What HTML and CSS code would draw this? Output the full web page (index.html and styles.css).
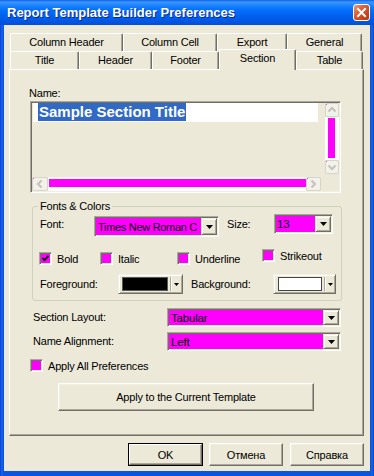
FILE: index.html
```html
<!DOCTYPE html>
<html>
<head>
<meta charset="utf-8">
<link rel="stylesheet" href="styles.css">
</head>
<body>
<div class="window">
  <div class="titlebar">
    <span class="title">Report Template Builder Preferences</span>
    <span class="close"><svg width="15" height="15" viewBox="0 0 15 15"><path d="M4 4 L11 11 M11 4 L4 11" stroke="#fff" stroke-width="2" stroke-linecap="square"/></svg></span>
  </div>
  <div class="client">
    <div class="tabs">
      <div class="tabrow">
        <div class="tab t113">Column Header</div>
        <div class="tab t94">Column Cell</div>
        <div class="tab t70">Export</div>
        <div class="tab t75">General</div>
      </div>
      <div class="tabrow">
        <div class="tab t69">Title</div>
        <div class="tab t73">Header</div>
        <div class="tab t67">Footer</div>
        <div class="tab t77 active">Section</div>
        <div class="tab t67">Table</div>
      </div>
    </div>
    <div class="panel">
      <div class="name-label">Name:</div>
      <div class="namefield">
        <div class="nf-top">
          <div class="nf-text">
            <div class="sel-row"><span class="sel">Sample Section Title</span></div>
          </div>
          <div class="vscroll">
            <div class="sbtn mark"><svg width="12" height="12" viewBox="0 0 12 12"><polyline points="2.5,7.5 6,4 9.5,7.5" fill="none" stroke="#C4C2B8" stroke-width="2"/></svg></div>
            <div class="vtrack"><div class="vthumb"></div></div>
            <div class="sbtn mark"><svg width="12" height="12" viewBox="0 0 12 12"><polyline points="2.5,4.5 6,8 9.5,4.5" fill="none" stroke="#C4C2B8" stroke-width="2"/></svg></div>
          </div>
        </div>
        <div class="hscroll">
          <div class="sbtn hb16 mark"><svg width="14" height="12" viewBox="0 0 14 12"><polyline points="8.5,2.5 5,6 8.5,9.5" fill="none" stroke="#C4C2B8" stroke-width="2"/></svg></div>
          <div class="htrack"><div class="hthumb"></div></div>
          <div class="sbtn hb15 mark"><svg width="13" height="12" viewBox="0 0 13 12"><polyline points="4.5,2.5 8,6 4.5,9.5" fill="none" stroke="#C4C2B8" stroke-width="2"/></svg></div>
        </div>
      </div>

      <div class="group">
        <div class="group-title">Fonts &amp; Colors</div>
        <div class="grow">
          <div class="glabel w54">Font:</div>
          <div class="combo font-combo">
            <div class="ctext">Times New Roman C</div>
            <div class="ddbtn"><svg width="7" height="4" viewBox="0 0 7 4"><polygon points="0,0 7,0 3.5,4" fill="#000"/></svg></div>
          </div>
          <div class="glabel size-label">Size:</div>
          <div class="combo size-combo">
            <div class="ctext">13</div>
            <div class="ddbtn"><svg width="7" height="4" viewBox="0 0 7 4"><polygon points="0,0 7,0 3.5,4" fill="#000"/></svg></div>
          </div>
        </div>
        <div class="checks">
          <div class="chk c61"><span class="cb"><svg width="9" height="9" viewBox="0 0 9 9"><polyline points="1.5,4 3.5,6.2 7.5,1.8" fill="none" stroke="#000" stroke-width="1.8"/></svg></span><span>Bold</span></div>
          <div class="chk c77"><span class="cb"></span><span>Italic</span></div>
          <div class="chk c85"><span class="cb"></span><span>Underline</span></div>
          <div class="chk up3"><span class="cb"></span><span>Strikeout</span></div>
        </div>
        <div class="colors">
          <div class="clabel w78">Foreground:</div>
          <div class="ccombo w65">
            <span class="swatch black w46"></span>
            <span class="csep"></span>
            <span class="carrow"><svg width="5" height="3" viewBox="0 0 5 3"><polygon points="0,0 5,0 2.5,3" fill="#000"/></svg></span>
          </div>
          <div class="clabel bg-label">Background:</div>
          <div class="ccombo w63">
            <span class="swatch white w44"></span>
            <span class="csep"></span>
            <span class="carrow"><svg width="5" height="3" viewBox="0 0 5 3"><polygon points="0,0 5,0 2.5,3" fill="#000"/></svg></span>
          </div>
        </div>
      </div>

      <div class="frow first">
        <div class="flabel">Section Layout:</div>
        <div class="combo wide-combo">
          <div class="ctext">Tabular</div>
          <div class="ddbtn"><svg width="7" height="4" viewBox="0 0 7 4"><polygon points="0,0 7,0 3.5,4" fill="#000"/></svg></div>
        </div>
      </div>
      <div class="frow second">
        <div class="flabel">Name Alignment:</div>
        <div class="combo wide-combo">
          <div class="ctext">Left</div>
          <div class="ddbtn"><svg width="7" height="4" viewBox="0 0 7 4"><polygon points="0,0 7,0 3.5,4" fill="#000"/></svg></div>
        </div>
      </div>
      <div class="apply-all"><span class="cb"></span><span>Apply All Preferences</span></div>
      <div class="btn apply-btn">Apply to the Current Template</div>
    </div>
    <div class="buttons">
      <div class="btn dlg default"><span class="inner">OK</span></div>
      <div class="btn dlg g6">Отмена</div>
      <div class="btn dlg g7">Справка</div>
    </div>
  </div>
</div>
</body>
</html>
```
FILE: styles.css
```css
* { box-sizing: border-box; }
html, body { margin: 0; padding: 0; }
body {
  font-family: "Liberation Sans", Arial, sans-serif;
  font-size: 11px;
  letter-spacing: -0.2px;
  color: #000;
  background: #0A55E0;
}
.window {
  width: 374px;
  height: 476px;
  display: flex;
  flex-direction: column;
  background: linear-gradient(to right, #0842C8 0, #1A66EE 2px, #0A55E0 3px, #0A55E0 371px, #1A66EE 372px, #0842C8 374px);
  overflow: hidden;
}
.titlebar {
  height: 25px;
  flex: none;
  display: flex;
  align-items: center;
  padding-left: 7px;
  background: linear-gradient(to bottom, #0A5FE8 0%, #3C95FF 8%, #2A8BFF 16%, #147EFF 26%, #046FFC 40%, #0264F0 58%, #005BE8 76%, #0055E3 88%, #0050D8 100%);
}
.title {
  font-weight: bold;
  font-size: 13px;
  letter-spacing: 0;
  color: #fff;
  text-shadow: 1px 1px #0A2A9A;
  line-height: 16px;
  margin-top: 1px;
}
.close {
  margin-left: auto;
  margin-right: 4px;
  width: 17px;
  height: 17px;
  border: 1px solid #fff;
  border-radius: 3px;
  background: linear-gradient(135deg, #EE9A7E 0%, #DE5A33 40%, #C9411B 75%, #B8361A 100%);
  display: flex;
  align-items: center;
  justify-content: center;
}
.close svg { display: block; }
.client {
  flex: 1;
  margin: 0 4px 5px;
  background: #ECE9D8;
  display: flex;
  flex-direction: column;
}
/* tabs */
.tabs { margin: 8px 0 0 6px; }
.tabrow { display: flex; height: 18px; }
.tab {
  height: 18px;
  border-top: 1px solid #fff;
  border-left: 1px solid #fff;
  border-right: 1px solid #716F64;
  box-shadow: inset -1px 0 #ACA899;
  border-radius: 2px 2px 0 0;
  text-align: center;
  line-height: 16px;
  background: #ECE9D8;
}
.tab.active {
  height: 21px;
  margin-top: -2px;
  margin-bottom: -1px;
  position: relative;
  z-index: 1;
}
.t113 { width: 113px; }
.t94 { width: 94px; }
.t70 { width: 70px; }
.t75 { width: 75px; }
.t69 { width: 69px; }
.t73 { width: 73px; }
.t67 { width: 67px; }
.t77 { width: 77px; }
/* panel */
.panel {
  margin-left: 5px;
  width: 355px;
  height: 367px;
  border-top: 1px solid #fff;
  border-left: 1px solid #fff;
  border-right: 1px solid #716F64;
  border-bottom: 1px solid #716F64;
  box-shadow: inset -1px -1px #ACA899;
}
.name-label { margin: 17px 0 0 19px; height: 13px; line-height: 13px; }
.namefield {
  margin: 1px 0 0 20px;
  width: 311px;
  height: 92px;
  border: 1px solid;
  border-color: #ACA899 #fff #fff #ACA899;
  box-shadow: inset 1px 1px #716F64, inset -1px -1px #F1EFE2;
  padding: 1px;
}
.nf-top { display: flex; height: 72px; }
.nf-text { width: 293px; }
.sel-row {
  margin-left: 1px;
  width: 285px;
  height: 19px;
  background: #fff;
  padding-left: 5px;
}
.sel {
  display: inline-block;
  background: #316AC5;
  color: #fff;
  font-weight: bold;
  font-size: 15px;
  letter-spacing: 0;
  height: 18px;
  line-height: 18px;
  padding: 0 1px 0 1px;
}
.vscroll { width: 14px; height: 71px; display: flex; flex-direction: column; }
.sbtn {
  width: 14px;
  height: 14px;
  flex: none;
  border: 1px solid #D7D5C9;
  border-radius: 2px;
  background-color: #F2F1EA;
  display: flex;
  align-items: center;
  justify-content: center;
}
.sbtn svg { display: block; }
.sbtn.mark {
  background: linear-gradient(#FF00FF, #FF00FF) 0 0 / 1px 1px no-repeat, #F2F1EA;
}
.vtrack { flex: 1; background: #FDFDFB; padding: 1px 0 2px 3px; }
.vthumb { width: 7px; height: 100%; background: #FF00FF; }
.hscroll { margin-top: 2px; height: 14px; width: 289px; display: flex; }
.hb16 { width: 16px; }
.hb15 { width: 15px; }
.htrack { width: 258px; background: #FDFDFB; padding: 2px 0 0 1px; }
.hthumb { width: 257px; height: 8px; background: #FF00FF; }
/* group */
.group {
  margin: 13px 0 0 22px;
  width: 310px;
  height: 95px;
  border: 1px solid #D0D0BF;
  border-radius: 3px;
}
.group-title {
  display: table;
  margin: -7px 0 0 5px;
  padding: 0 2px;
  background: #ECE9D8;
  height: 13px;
  line-height: 13px;
}
.grow { display: flex; align-items: flex-start; margin: 3px 0 0 7px; height: 21px; }
.glabel { line-height: 16px; }
.w54 { width: 54px; }
.size-label { margin-left: 8px; width: 47px; }
.combo {
  display: flex;
  background: #FF00FF;
  border: 1px solid;
  border-color: #ACA899 #fff #fff #ACA899;
  box-shadow: inset 1px 1px #716F64, inset -1px -1px #F1EFE2;
  padding: 1px;
}
.ctext {
  flex: 1;
  min-width: 0;
  overflow: hidden;
  white-space: nowrap;
  padding-left: 2px;
  display: flex;
  align-items: center;
}
.font-combo { width: 125px; height: 21px; }
.font-combo .ctext { padding-left: 2px; font-size: 11px; letter-spacing: -0.3px; }
.size-combo { width: 59px; height: 20px; margin-top: -2px; }
.size-combo .ctext { padding-left: 1px; font-size: 11.5px; }
.ddbtn {
  width: 16px;
  flex: none;
  background: #ECE9D8;
  border: 1px solid;
  border-color: #F1EFE2 #716F64 #716F64 #F1EFE2;
  box-shadow: inset 1px 1px #fff, inset -1px -1px #ACA899;
  display: flex;
  align-items: center;
  justify-content: center;
}
.ddbtn svg { display: block; }
.checks { display: flex; align-items: flex-start; margin: 15px 0 0 6px; height: 13px; }
.chk { display: flex; align-items: center; gap: 5px; height: 13px; }
.c61 { width: 61px; }
.c77 { width: 77px; }
.c85 { width: 85px; }
.up3 { margin-top: -3px; }
.cb {
  width: 13px;
  height: 13px;
  flex: none;
  background: #FF00FF;
  border: 1px solid;
  border-color: #ACA899 #fff #fff #ACA899;
  box-shadow: inset 1px 1px #716F64, inset -1px -1px #F1EFE2;
  display: flex;
  align-items: center;
  justify-content: center;
}
.cb svg { display: block; }
.colors { display: flex; margin: 9px 0 0 7px; height: 20px; }
.clabel { line-height: 20px; }
.w78 { width: 78px; }
.bg-label { margin-left: 8px; width: 82px; }
.ccombo {
  height: 20px;
  display: flex;
  align-items: center;
  border: 1px solid;
  border-color: #F1EFE2 #716F64 #716F64 #F1EFE2;
  box-shadow: inset 1px 1px #fff, inset -1px -1px #ACA899;
  padding: 0 0 0 3px;
  background: #ECE9D8;
}
.w65 { width: 65px; }
.w63 { width: 63px; margin-left: 0; }
.w63 .swatch { margin-left: 1px; }
.swatch { height: 14px; border: 1px solid #5A5A5A; flex: none; }
.swatch.black { background: #000; }
.swatch.white { background: #fff; border-color: #444; }
.w46 { width: 46px; }
.w44 { width: 44px; }
.csep {
  width: 2px;
  height: 14px;
  margin-left: 2px;
  border-left: 1px solid #ACA899;
  border-right: 1px solid #fff;
  flex: none;
}
.carrow { flex: 1; display: flex; justify-content: center; align-items: center; padding-right: 1px; }
.carrow svg { display: block; }
/* form rows */
.frow { display: flex; margin-left: 23px; height: 19px; }
.frow.first { margin-top: 7px; }
.frow.second { margin-top: 5px; }
.flabel { width: 134px; line-height: 19px; }
.wide-combo { width: 174px; height: 19px; }
.wide-combo .ctext { padding-left: 2px; font-size: 11.5px; }
.apply-all { display: flex; align-items: center; gap: 5px; margin: 8px 0 0 20px; height: 13px; }
.btn {
  display: flex;
  align-items: center;
  justify-content: center;
  background: #ECE9D8;
  border: 1px solid;
  border-color: #fff #716F64 #716F64 #fff;
  box-shadow: inset -1px -1px #ACA899, inset 1px 1px #F1EFE2;
}
.apply-btn { margin: 11px 0 0 48px; width: 256px; height: 28px; }
.buttons { display: flex; justify-content: flex-end; margin: 7px 6px 0 0; }
.dlg { width: 74px; height: 23px; }
.dlg.default {
  width: 75px;
  border: 1px solid #000;
  box-shadow: none;
  padding: 0;
}
.dlg.default .inner {
  width: 100%;
  height: 100%;
  display: flex;
  align-items: center;
  justify-content: center;
  border: 1px solid;
  border-color: #fff #716F64 #716F64 #fff;
  box-shadow: inset -1px -1px #ACA899;
}
.g6 { margin-left: 6px; }
.g7 { margin-left: 7px; }
```
